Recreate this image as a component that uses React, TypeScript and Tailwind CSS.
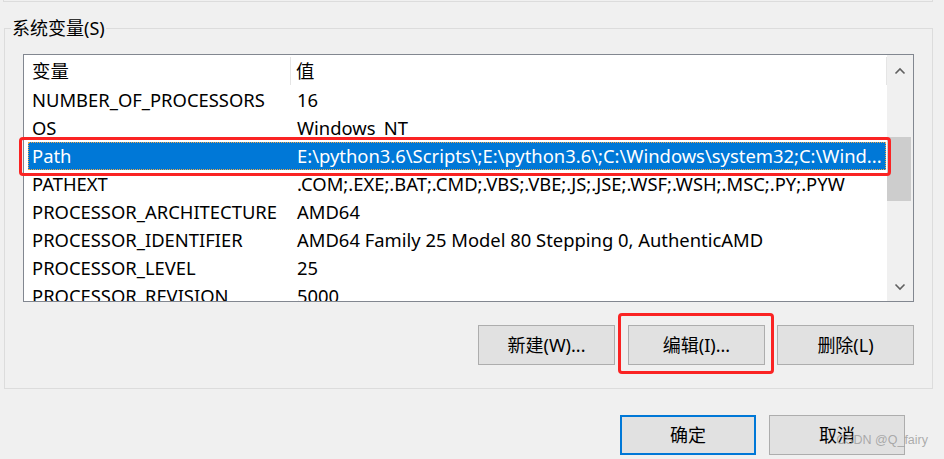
const rows: [string, string][] = [
  ['NUMBER_OF_PROCESSORS', '16'],
  ['OS', 'Windows_NT'],
  ['Path', 'E:\\python3.6\\Scripts\\;E:\\python3.6\\;C:\\Windows\\system32;C:\\Wind...'],
  ['PATHEXT', '.COM;.EXE;.BAT;.CMD;.VBS;.VBE;.JS;.JSE;.WSF;.WSH;.MSC;.PY;.PYW'],
  ['PROCESSOR_ARCHITECTURE', 'AMD64'],
  ['PROCESSOR_IDENTIFIER', 'AMD64 Family 25 Model 80 Stepping 0, AuthenticAMD'],
  ['PROCESSOR_LEVEL', '25'],
  ['PROCESSOR_REVISION', '5000'],
]

const font = "font-['Noto_Sans','Noto_Sans_CJK_SC',sans-serif]"

const Chevron = ({ up }: { up?: boolean }) => (
  <svg width="12" height="8" viewBox="0 0 12 8" className="text-[#606060]">
    <path
      d={up ? 'M1.5 6.5L6 2l4.5 4.5' : 'M1.5 1.5L6 6l4.5-4.5'}
      fill="none"
      stroke="currentColor"
      strokeWidth={1.6}
    />
  </svg>
)

const WinButton = ({ children, primary }: { children: React.ReactNode; primary?: boolean }) => (
  <button
    className={
      primary
        ? 'w-[136px] h-[40px] bg-[#e1e1e1] border-2 border-[#0078d7] text-[18px] text-black'
        : 'w-[137px] h-[40px] bg-[#e1e1e1] border border-[#adadad] text-[18px] text-black'
    }
  >
    {children}
  </button>
)

export default function App() {
  return (
    <div className={`w-[944px] h-[459px] bg-[#f0f0f0] overflow-hidden relative ${font}`}>
      {/* bottom of the group above */}
      <div className="ml-[3px] w-[930px] h-[2px] border-x border-b border-[#dcdcdc]" />

      <fieldset className="mt-[16px] ml-[4px] w-[929px] border border-[#dcdcdc]">
        <legend className="ml-[6px] px-[1px] text-[18px] leading-[20px] text-black">系统变量(S)</legend>

        <div className="px-[18px] pt-[16px] pb-[23px]">
          {/* list view */}
          <div className="relative">
            <div className="h-[248px] border border-[#828790] bg-white flex overflow-hidden">
              <div className="flex-1 min-w-0 text-[18.4px] text-black">
                <div className="h-[31px] flex items-center pl-[4px]">
                  <div className="w-[263px] h-[28px] pl-[4px] flex items-center border-r border-[#e5e5e5]">变量</div>
                  <div className="flex-1 h-[28px] pl-[5px] flex items-center border-r border-[#e5e5e5]">值</div>
                </div>
                {rows.map(([name, value]) => {
                  const sel = name === 'Path'
                  return (
                    <div
                      key={name}
                      className={
                        sel
                          ? 'h-[28px] ml-[4px] mr-[1px] flex items-center bg-[#0078d7] text-white outline outline-1 outline-dotted outline-[#f0a848] -outline-offset-1'
                          : 'h-[28px] ml-[4px] mr-[1px] flex items-center'
                      }
                    >
                      <div className="w-[265px] pl-[4px] whitespace-nowrap">{name}</div>
                      <div className="flex-1 pl-[4px] whitespace-nowrap overflow-hidden">{value}</div>
                    </div>
                  )
                })}
              </div>
              {/* scrollbar */}
              <div className="w-[26px] bg-[#f0f0f0] flex flex-col items-center">
                <div className="h-[31px] flex items-center justify-center">
                  <Chevron up />
                </div>
                <div className="h-[51px]" />
                <div className="w-[24px] h-[64px] bg-[#cdcdcd] self-start" />
                <div className="flex-1" />
                <div className="h-[28px] flex items-center justify-center">
                  <Chevron />
                </div>
              </div>
            </div>
            {/* red annotation around Path row */}
            <div className="absolute left-[-4px] top-[83px] w-[872px] h-[39px] border-[3px] border-[#fa2323] rounded-[4px] pointer-events-none" />
          </div>

          {/* action buttons */}
          <div className="mt-[23px] flex justify-end gap-[12px]">
            <div className="mr-[1px]">
              <WinButton>新建(W)...</WinButton>
            </div>
            <div className="relative">
              <WinButton>编辑(I)...</WinButton>
              <div className="absolute left-[-10px] top-[-12px] right-[-9px] bottom-[-9px] border-[3px] border-[#fa2323] rounded-[4px] pointer-events-none" />
            </div>
            <WinButton>删除(L)</WinButton>
          </div>
        </div>
      </fieldset>

      {/* dialog buttons */}
      <div className="mt-[26px] pr-[39px] flex justify-end gap-[13px]">
        <WinButton primary>确定</WinButton>
        <button className="w-[136px] h-[40px] bg-[#e1e1e1] border border-[#adadad] text-[18px] text-black">取消</button>
      </div>

      <div className="absolute right-[16px] bottom-[9px] text-[12.5px] text-[#9a9a9a]/80 font-['Liberation_Sans',sans-serif] pointer-events-none">
        CSDN @Q_fairy
      </div>
    </div>
  )
}
